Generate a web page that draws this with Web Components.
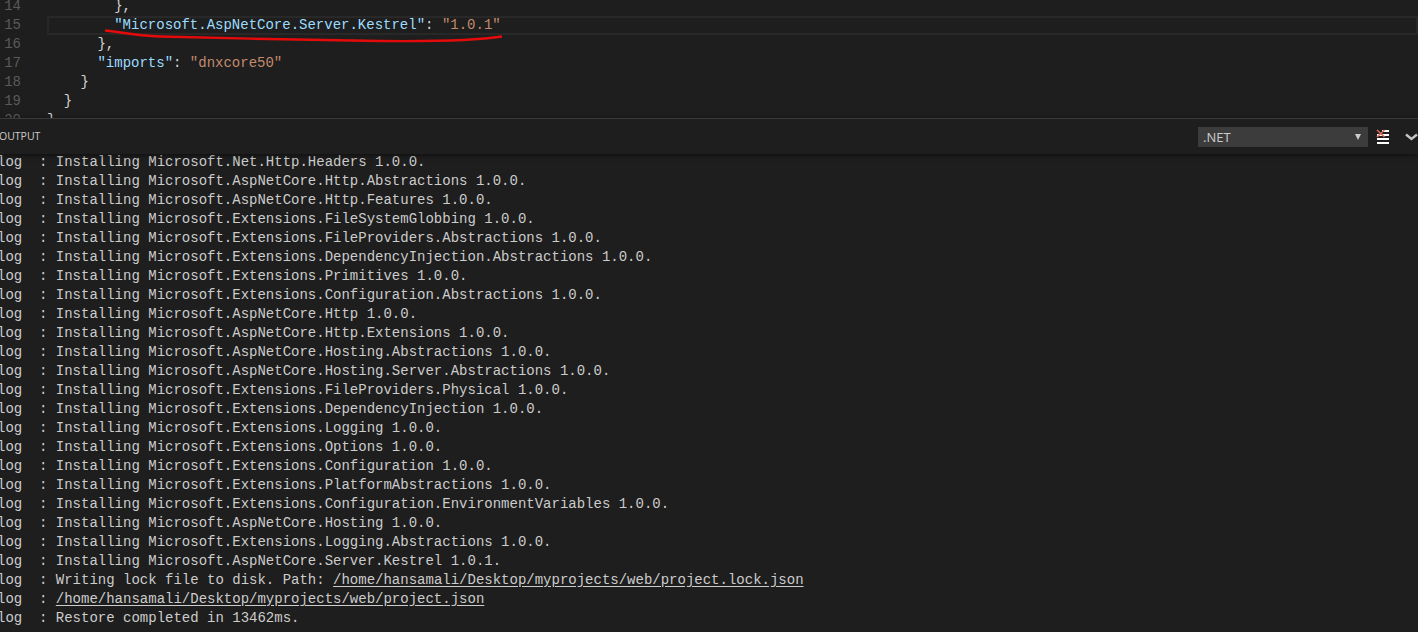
<!doctype html>
<html><head><meta charset="utf-8"><style>
html,body{margin:0;padding:0;width:1418px;height:632px;overflow:hidden;background:#1e1e1e}
body{display:flex;flex-direction:column;font-family:"Liberation Mono",monospace}
</style></head><body>
<code-editor></code-editor>
<panel-header></panel-header>
<output-log></output-log>
<script>
const esc=s=>s.replace(/&/g,'&amp;').replace(/</g,'&lt;');
class CodeEditor extends HTMLElement{constructor(){super();const r=this.attachShadow({mode:'open'});
const k=s=>`<span class="k">${s}</span>`,v=s=>`<span class="v">${s}</span>`,p=s=>`<span class="p">${s}</span>`;
const lines=[[14,8,p('},')],[15,8,k('"Microsoft.AspNetCore.Server.Kestrel"')+p(': ')+v('"1.0.1"'),1],[16,6,p('},')],[17,6,k('"imports"')+p(': ')+v('"dnxcore50"')],[18,4,p('}')],[19,2,p('}')],[20,0,p('}')]];
r.innerHTML=`<style>
:host{display:block;height:118px;overflow:hidden;position:relative;flex:none;font:14px/19px "Liberation Mono",monospace;background:#1e1e1e}
.wrap{margin-top:-3px}
.l{display:flex;height:19px;white-space:pre}
.n{width:21px;flex:none;text-align:right;color:#5a5a5a}
.c{margin-left:26px;flex:1;box-sizing:border-box;height:19px}
.cur{outline:2px solid #282828;outline-offset:-2px}
.k{color:#9cdcfe}.v{color:#c48a6e}.p{color:#d4d4d4}
svg{position:absolute;left:0;top:0}
</style><div class="wrap">${lines.map(([n,i,h,c])=>`<div class="l"><span class="n">${n}</span><div class="c${c?' cur':''}">${' '.repeat(i)}${h}</div></div>`).join('')}</div>
<svg width="520" height="50" fill="none"><path d="M105 30.5C120 32 135 35.5 160 36.5C230 38.5 320 40 380 41C430 41.5 480 40 502 36.5" stroke="#e60a0a" stroke-width="2.4"/></svg>`;}}
class PanelHeader extends HTMLElement{constructor(){super();this.attachShadow({mode:'open'}).innerHTML=`<style>
:host{display:flex;align-items:center;height:36px;flex:none;box-sizing:border-box;border-top:1px solid #3a3a3a;background:#1e1e1e;box-shadow:0 1px 5px rgba(0,0,0,.55);position:relative;z-index:1;color:#ccc}
.t{font:10.5px "Open Sans",sans-serif;margin-left:-1px;margin-top:-1px;flex:1}
.s{width:170px;height:20px;background:#3c3c3c;color:#ccc;display:flex;align-items:center;justify-content:space-between;box-sizing:border-box;padding:0 7px 0 5px;font:13px "Open Sans",sans-serif;margin-top:1px}
.a{width:0;height:0;border:3.5px solid transparent;border-top:6px solid #ccc;border-bottom:0}
svg{flex:none;display:block}
.x{margin-left:8px}.d{margin-left:15px}
</style><span class="t">OUTPUT</span><div class="s"><span>.NET</span><i class="a"></i></div>
<svg class="x" width="14" height="17" viewBox="0 0 14 17"><path d="M6 3H13M1 7H13M1 11H13M1 15H13" stroke="#fff" stroke-width="2"/><path d="M1 2L8.5 9M8.5 2L1 9" stroke="#d9695a" stroke-width="1.6"/></svg>
<svg class="d" width="13" height="8" viewBox="0 0 13 8" fill="none"><path d="M1 1.5L6.5 6L12 1.5" stroke="#c5c5c5" stroke-width="2.4"/></svg>`;}}
const L=`Installing Microsoft.Net.Http.Headers 1.0.0.
Installing Microsoft.AspNetCore.Http.Abstractions 1.0.0.
Installing Microsoft.AspNetCore.Http.Features 1.0.0.
Installing Microsoft.Extensions.FileSystemGlobbing 1.0.0.
Installing Microsoft.Extensions.FileProviders.Abstractions 1.0.0.
Installing Microsoft.Extensions.DependencyInjection.Abstractions 1.0.0.
Installing Microsoft.Extensions.Primitives 1.0.0.
Installing Microsoft.Extensions.Configuration.Abstractions 1.0.0.
Installing Microsoft.AspNetCore.Http 1.0.0.
Installing Microsoft.AspNetCore.Http.Extensions 1.0.0.
Installing Microsoft.AspNetCore.Hosting.Abstractions 1.0.0.
Installing Microsoft.AspNetCore.Hosting.Server.Abstractions 1.0.0.
Installing Microsoft.Extensions.FileProviders.Physical 1.0.0.
Installing Microsoft.Extensions.DependencyInjection 1.0.0.
Installing Microsoft.Extensions.Logging 1.0.0.
Installing Microsoft.Extensions.Options 1.0.0.
Installing Microsoft.Extensions.Configuration 1.0.0.
Installing Microsoft.Extensions.PlatformAbstractions 1.0.0.
Installing Microsoft.Extensions.Configuration.EnvironmentVariables 1.0.0.
Installing Microsoft.AspNetCore.Hosting 1.0.0.
Installing Microsoft.Extensions.Logging.Abstractions 1.0.0.
Installing Microsoft.AspNetCore.Server.Kestrel 1.0.1.
Writing lock file to disk. Path: [/home/hansamali/Desktop/myprojects/web/project.lock.json]
[/home/hansamali/Desktop/myprojects/web/project.json]
Restore completed in 13462ms.`.split('\n');
class OutputLog extends HTMLElement{constructor(){super();this.attachShadow({mode:'open'}).innerHTML=`<style>
:host{display:block;flex:1;overflow:hidden;font:14px/19px "Liberation Mono",monospace;color:#ccc;background:#1e1e1e}
.w{margin:-1px 0 0 -3px}.l{height:19px;white-space:pre}u{text-underline-offset:2px}
</style><div class="w">${L.map(s=>`<div class="l">log  : ${esc(s).replace(/\[(.*)\]/,'<u>$1</u>')}</div>`).join('')}</div>`;}}
customElements.define('code-editor',CodeEditor);customElements.define('panel-header',PanelHeader);customElements.define('output-log',OutputLog);
</script></body></html>
